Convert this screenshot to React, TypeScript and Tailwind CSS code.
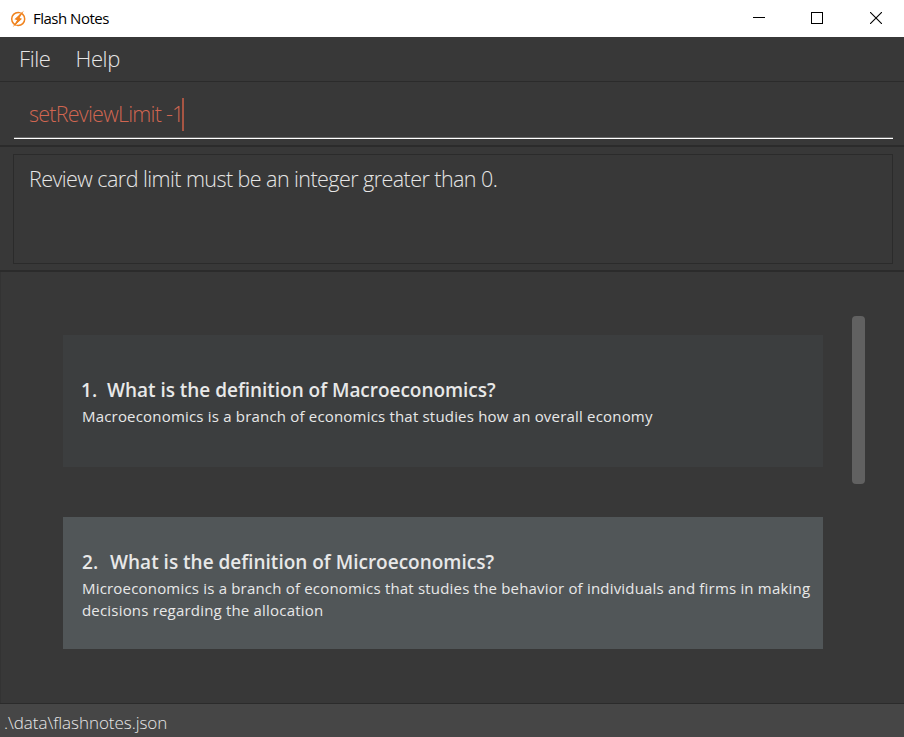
interface FlashCardProps {
  index: number;
  question: string;
  answer: string;
  selected?: boolean;
}

function FlashCard({ index, question, answer, selected = false }: FlashCardProps) {
  return (
    <li
      className={`flex h-[132px] w-[760px] flex-col justify-center pl-[19px] text-[#e8e8e8] ${
        selected ? "bg-[#515658] pt-[4px]" : "bg-[#3c3e3f] pt-[2px]"
      }`}
    >
      <h2 className="flex text-[19px] leading-[26px] font-semibold whitespace-pre">
        <span className={selected ? "mr-[12px]" : "mr-[10px] -ml-px"}>{index}.</span>
        <span className={selected ? "tracking-normal" : "tracking-[-0.03px]"}>{question}</span>
      </h2>
      <p className="mt-[2px] text-[15px] leading-[22px] tracking-[0.19px] whitespace-pre-line">{answer}</p>
    </li>
  );
}

function TitleBar() {
  return (
    <header className="flex h-[37px] shrink-0 items-center bg-white pl-[10px] text-black">
      <svg width="17" height="18" viewBox="0 0 17 18">
        <circle cx="8.2" cy="9" r="6.5" fill="none" stroke="#f0831e" strokeWidth="1.5" />
        <path d="M14 .5 4.4 9.3l2.8.6L2.6 17.3l9.6-8.5-2.9-.6z" fill="#f0831e" />
        <path d="M10.6 2.8 3.7 9.1M5.9 15.4l6.8-6.3" stroke="#fff" strokeWidth=".7" />
        <path d="M10.5 4 6 9.3l1.8.4-1.6 4.1 4.5-5-1.9-.4z" fill="#f0831e" stroke="#f0831e" strokeWidth=".7" />
      </svg>
      <h1 className="ml-[6px] text-[15px] tracking-[-0.5px]">Flash Notes</h1>
      <div className="ml-auto flex h-full items-center pb-px">
        <button className="flex w-[58px] justify-center" aria-label="Minimize">
          <svg width="12" height="12" shapeRendering="crispEdges">
            <path d="M0 5.5h12" stroke="#000" />
          </svg>
        </button>
        <button className="flex w-[58px] justify-center" aria-label="Maximize">
          <svg width="12" height="12" shapeRendering="crispEdges">
            <rect x=".5" y=".5" width="11" height="11" fill="none" stroke="#000" />
          </svg>
        </button>
        <button className="flex w-[58px] justify-center pl-[2px]" aria-label="Close">
          <svg width="12" height="12">
            <path d="m0 0 12 12M12 0 0 12" stroke="#000" strokeWidth="1.1" />
          </svg>
        </button>
      </div>
    </header>
  );
}

export default function App() {
  return (
    <div className="flex h-[737px] w-[904px] flex-col overflow-hidden bg-[#383838] font-['Open_Sans','Noto_Sans',sans-serif]">
      <TitleBar />
      <nav className="flex h-[44px] shrink-0 items-center gap-[25px] pb-[2px] pl-[19px] text-[22px] font-light tracking-[-0.4px] text-[#e6e6e6]">
        <span>File</span>
        <span>Help</span>
      </nav>
      <section className="h-[66px] shrink-0 border-t border-b-2 border-[#2b2b2b] pr-[11px] pl-[14px]">
        <div className="h-[57px] border-b border-b-white">
          <div className="flex h-[56px] items-center border-b border-b-[#686868] pt-[9px] pl-[15px] text-[21.5px] font-light tracking-[-0.75px] text-[#d06651]">
            <span>setReviewLimit -1</span>
            <span className="-ml-[2px] h-[33px] w-[2px] bg-[#a75543]" />
          </div>
        </div>
      </section>
      <section className="h-[125px] shrink-0 border-b-2 border-[#2b2b2b] pt-[7px] pr-[11px] pl-[13px]">
        <div className="h-[110px] border border-[#2b2b2b] pt-[8px] pl-[15px] text-[21.5px] leading-[32px] font-light tracking-[-0.56px] text-[#e6e6e6]">
          Review card limit must be an integer greater than 0.
        </div>
      </section>
      <main className="flex min-h-0 flex-1 border-l border-[#333] pl-[62px]">
        <ul className="flex flex-col gap-[50px] pt-[63px]">
          <FlashCard
            index={1}
            question="What is the definition of Macroeconomics?"
            answer="Macroeconomics is a branch of economics that studies how an overall economy"
          />
          <FlashCard
            index={2}
            question="What is the definition of Microeconomics?"
            answer={"Microeconomics is a branch of economics that studies the behavior of individuals and firms in making\ndecisions regarding the allocation"}
            selected
          />
        </ul>
        <div className="mt-[44px] ml-[29px] h-[168px] w-[13px] rounded-[4px] bg-[#616161]" />
      </main>
      <footer className="flex h-[34px] shrink-0 items-center border-t border-[#2b2b2b] bg-[#464646] pt-[5px] pl-[4px] text-[17px] font-light tracking-[-0.04px] text-[#e6e6e6]">
        .\data\flashnotes.json
      </footer>
    </div>
  );
}
